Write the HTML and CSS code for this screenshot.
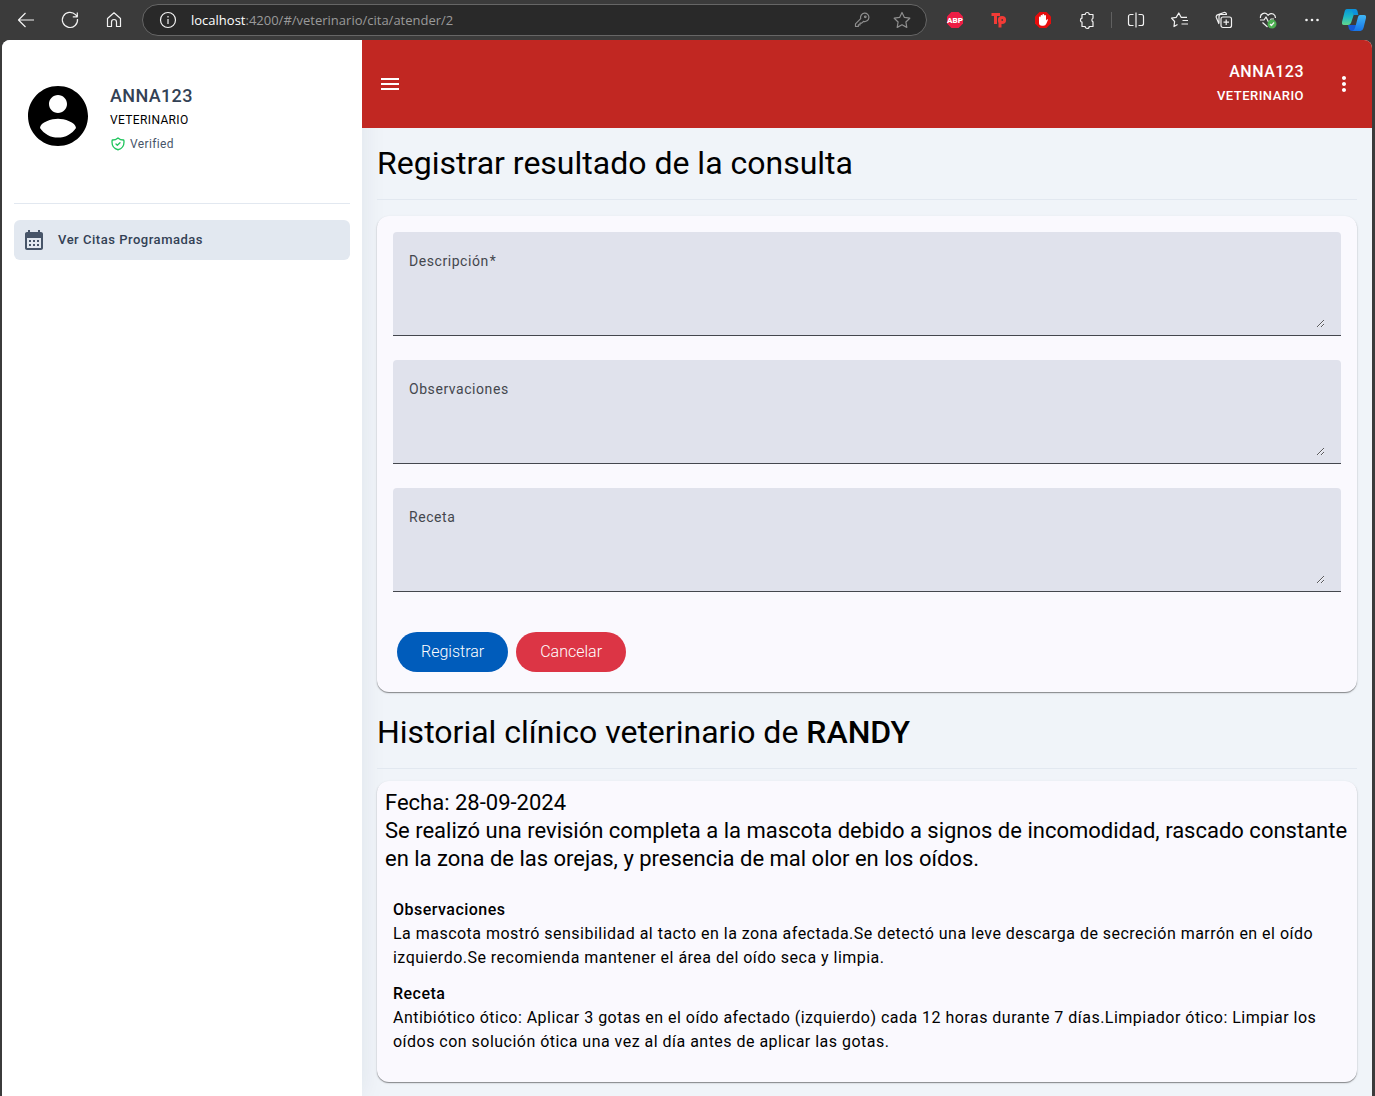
FILE: index.html
```html
<!DOCTYPE html>
<html lang="es">
<head>
<meta charset="utf-8">
<meta name="viewport" content="width=device-width, initial-scale=1">
<title>Registrar resultado de la consulta</title>
<link rel="stylesheet" href="styles.css">
</head>
<body>
<div class="browser">
  <div class="toolbar">
    <div class="toolbar-nav">
      <button class="tool" type="button" aria-label="Atrás"><svg viewBox="0 0 20 20"><path d="M18 10H3M9.500 3 2.500 10l7 7"/></svg></button>
      <button class="tool" type="button" aria-label="Actualizar"><svg viewBox="0 0 20 20"><path d="M17.500 9A7.600 7.600 0 1 1 15.500 4.700L17.200 6.500M17.300 2.500v4.300h-4.500"/></svg></button>
      <button class="tool" type="button" aria-label="Inicio"><svg viewBox="0 0 20 20"><path d="M3.500 8.500v8h4v-4.500a2.500 2.500 0 0 1 5 0v4.500h4v-8L10 2.800z"/></svg></button>
    </div>
    <div class="address">
      <button class="tool" type="button" aria-label="Información del sitio"><svg viewBox="0 0 20 20"><circle cx="10" cy="10" r="7.500"/><path d="M10 9v5M10 6v1.500"/></svg></button>
      <div class="url"><span class="host">localhost</span>:4200/#/veterinario/cita/atender/2</div>
      <div class="address-actions">
        <button class="tool dim" type="button" aria-label="Contraseñas"><svg viewBox="0 0 20 20"><path d="M3.500 16.500v-2.700l5.200-5.200a4.200 4.200 0 1 1 2.800 2.800L9.700 13.200H8v1.700H6.300v1.600z"/><circle cx="13.300" cy="6.800" r=".8"/></svg></button>
        <button class="tool dim" type="button" aria-label="Favoritos"><svg viewBox="0 0 20 20"><path d="m10 2.500 2.400 4.900 5.400.8-3.900 3.800.9 5.400-4.800-2.600-4.800 2.600.9-5.400-3.900-3.800 5.400-.8z"/></svg></button>
      </div>
    </div>
    <div class="extensions">
      <button class="tool" type="button" aria-label="Adblock Plus"><svg viewBox="0 0 20 20"><path class="abp" d="M6.400 2h7.200L18 6.400v7.200L13.600 18H6.400L2 13.600V6.400z"/><text class="abp-text" x="10" y="13">ABP</text></svg></button>
      <button class="tool" type="button" aria-label="Tp"><svg viewBox="0 0 20 20"><path class="tp" d="M2.500 4.500H11M6.500 4.500V14M11 9v8.500"/><circle class="tp" cx="13" cy="10" r="2.600"/></svg></button>
      <button class="tool" type="button" aria-label="AdBlock"><svg viewBox="0 0 20 20"><path class="adb" d="M6.500 2h7L18 6.500v7L13.500 18h-7L2 13.500v-7z"/><path class="hand" d="M6 7.500q0-1 .8-1t.8 1V6q0-1 .9-1t.9 1V5q0-1 .9-1t.9 1v1q0-1 .9-1t.9 1v4.500l.9-1q.8-.6 1.200 0l-1.700 4q-.9 2.200-3 2.200H9Q6 15.700 6 13z"/></svg></button>
      <button class="tool" type="button" aria-label="Extensiones"><svg viewBox="0 0 20 20"><path d="M5 4.500h3.200a2 2 0 0 1 4 0H16v3.800a2 2 0 0 0 0 3.600v4.600h-3.800a2 2 0 0 1-4 0H5v-4.400a2 2 0 0 1 0-3.900z"/></svg></button>
    </div>
    <div class="tools">
      <button class="tool" type="button" aria-label="Pantalla dividida"><svg viewBox="0 0 20 20"><path d="M7.500 4.500h-3a2 2 0 0 0-2 2v7a2 2 0 0 0 2 2h3M12.500 4.500h3a2 2 0 0 1 2 2v7a2 2 0 0 1-2 2h-3M10 2.500v15"/></svg></button>
      <button class="tool" type="button" aria-label="Lista de favoritos"><svg viewBox="0 0 20 20"><path d="m7.500 14.500-3.500 2 .6-5L1.500 8.200l4.700-.8L8.800 3l2.300 4.300H17M12.500 10.500H18M11.500 14H18"/></svg></button>
      <button class="tool" type="button" aria-label="Colecciones"><svg viewBox="0 0 20 20"><rect x="7" y="7" width="10.500" height="10.500" rx="2"/><path d="M12.200 9.500v5.500M9.500 12.200H15M5 14 2.300 7.500a2 2 0 0 1 1.200-2.600l6.500-2.400a2 2 0 0 1 2.500 1.500M5 13V6.500a2 2 0 0 1 2-2h6"/></svg></button>
      <button class="tool" type="button" aria-label="Rendimiento"><svg viewBox="0 0 20 20"><path d="M2.500 8a4 4 0 0 1 7-3.300l.6.600.7-.7A4 4 0 0 1 17.400 8M2 10h4l2-3 3 6 2-4h3M4.500 12.500 9.500 17"/><circle class="ok" cx="14" cy="14" r="4.500"/><path d="m12 14 1.400 1.500 2.700-3"/></svg></button>
      <button class="tool" type="button" aria-label="Más"><svg viewBox="0 0 20 20"><g class="dots"><circle cx="4.500" cy="10" r="1.300"/><circle cx="10" cy="10" r="1.300"/><circle cx="15.500" cy="10" r="1.300"/></g></svg></button>
    </div>
    <button class="tool copilot" type="button" aria-label="Copilot"><svg viewBox="0 0 24 24"><defs><linearGradient id="ca" x1="0" y1="0" x2="0" y2="1"><stop offset="0" stop-color="#0795d8"/><stop offset=".5" stop-color="#1eb9c6"/><stop offset="1" stop-color="#62d68c"/></linearGradient><linearGradient id="cb" x1="0" y1="0" x2="0" y2="1"><stop offset="0" stop-color="#40b7f5"/><stop offset="1" stop-color="#1674e8"/></linearGradient></defs><path fill="#1558d6" d="M6 17h10l-3 4.500q-1 1.500-3 1.500-2 0-3-2z"/><path fill="url(#ca)" d="M5 1h7q2 0 2.500 2L12 6 9 15q-.8 2-3 2H2q-2.500 0-2-3L2.500 4Q3 1 5 1z"/><path fill="#0d92dd" d="M9 1h4q2 0 2.500 2l.8 4H12z"/><path fill="url(#cb)" d="M18 7h4q2.500 0 2 3l-2.500 10q-.8 3-3 3H10q2 0 3-3l3-11q.5-2 2-2z"/></svg></button>
  </div>

  <div class="app">
    <aside class="sidebar">
      <div class="profile">
        <svg class="avatar" viewBox="0 0 24 24" aria-hidden="true"><path d="M12 2C6.480 2 2 6.480 2 12s4.480 10 10 10 10-4.480 10-10S17.520 2 12 2zm0 3c1.660 0 3 1.340 3 3s-1.340 3-3 3-3-1.340-3-3 1.340-3 3-3zm0 14.200c-2.500 0-4.710-1.280-6-3.220.03-1.990 4-3.080 6-3.080 1.990 0 5.970 1.090 6 3.080-1.290 1.940-3.500 3.220-6 3.220z"/></svg>
        <div class="profile-text">
          <div class="profile-name">ANNA123</div>
          <div class="profile-role">VETERINARIO</div>
          <div class="verified"><svg viewBox="0 0 24 24" aria-hidden="true"><path d="m9 12 2 2 4-4m5.600-4A12 12 0 0 1 12 2.900 12 12 0 0 1 3.400 6 12 12 0 0 0 3 9c0 5.600 3.800 10.300 9 11.600 5.200-1.300 9-6 9-11.600 0-1-.1-2.100-.4-3z"/></svg>Verified</div>
        </div>
      </div>
      <nav class="menu">
        <a class="menu-item" href="#citas"><svg viewBox="0 0 24 24" aria-hidden="true"><path d="M19 4h-1V2h-2v2H8V2H6v2H5c-1.110 0-1.990.9-1.990 2L3 20c0 1.100.89 2 2 2h14c1.100 0 2-.9 2-2V6c0-1.100-.9-2-2-2zm0 16H5V10h14v10zM9 14H7v-2h2v2zm4 0h-2v-2h2v2zm4 0h-2v-2h2v2zm-8 4H7v-2h2v2zm4 0h-2v-2h2v2zm4 0h-2v-2h2v2z"/></svg>Ver Citas Programadas</a>
      </nav>
    </aside>

    <div class="content">
      <header class="topbar">
        <button class="icon-button" type="button" aria-label="Menú"><svg viewBox="0 0 24 24"><path d="M3 18h18v-2H3v2zm0-5h18v-2H3v2zm0-7v2h18V6H3z"/></svg></button>
        <div class="account">
          <div class="account-name">ANNA123</div>
          <div class="account-role">VETERINARIO</div>
        </div>
        <button class="icon-button" type="button" aria-label="Opciones"><svg viewBox="0 0 24 24"><path d="M12 8c1.100 0 2-.9 2-2s-.9-2-2-2-2 .9-2 2 .9 2 2 2zm0 2c-1.100 0-2 .9-2 2s.9 2 2 2 2-.9 2-2-.9-2-2-2zm0 6c-1.100 0-2 .9-2 2s.9 2 2 2 2-.9 2-2-.9-2-2-2z"/></svg></button>
      </header>

      <main class="main">
        <h1 class="title">Registrar resultado de la consulta</h1>
        <form class="card form">
          <div class="field">
            <textarea id="descripcion" required></textarea>
            <label for="descripcion">Descripción<span class="required">*</span></label>
          </div>
          <div class="field">
            <textarea id="observaciones"></textarea>
            <label for="observaciones">Observaciones</label>
          </div>
          <div class="field">
            <textarea id="receta"></textarea>
            <label for="receta">Receta</label>
          </div>
          <div class="actions">
            <button class="button primary" type="submit">Registrar</button>
            <button class="button danger" type="button">Cancelar</button>
          </div>
        </form>

        <h2 class="title">Historial clínico veterinario de <strong>RANDY</strong></h2>
        <article class="card record">
          <header class="record-head">
            <div>Fecha: 28-09-2024</div>
            <div>Se realizó una revisión completa a la mascota debido a signos de incomodidad, rascado constante en la zona de las orejas, y presencia de mal olor en los oídos.</div>
          </header>
          <div class="record-body">
            <section>
              <h3>Observaciones</h3>
              <p>La mascota mostró sensibilidad al tacto en la zona afectada.Se detectó una leve descarga de secreción marrón en el oído izquierdo.Se recomienda mantener el área del oído seca y limpia.</p>
            </section>
            <section>
              <h3>Receta</h3>
              <p>Antibiótico ótico: Aplicar 3 gotas en el oído afectado (izquierdo) cada 12 horas durante 7 días.Limpiador ótico: Limpiar los oídos con solución ótica una vez al día antes de aplicar las gotas.</p>
            </section>
          </div>
        </article>
      </main>
    </div>
  </div>
</div>
</body>
</html>
```
FILE: styles.css
```css
* {
  box-sizing: border-box;
}

:root {
  --tracking: 0.03em;
  --tracking-wide: 0.04em;
}

body {
  margin: 0;
  background: #3b3b3b;
  color: #000;
  font-family: Roboto, "Noto Sans", sans-serif;
  font-size: 16px;
  line-height: 24px;
}

h1, h2, h3, p {
  margin: 0;
}

button {
  border: 0;
  padding: 0;
  background: none;
  color: inherit;
  font: inherit;
  cursor: pointer;
}

.browser {
  display: flex;
  flex-direction: column;
  min-height: 100vh;
}

/* Browser toolbar */
.toolbar {
  display: flex;
  align-items: center;
  height: 40px;
  padding-left: 16px;
  padding-right: 9px;
  color: #f2f2f2;
}

.toolbar-nav,
.extensions,
.tools,
.address-actions {
  display: flex;
  align-items: center;
  gap: 24px;
}

.tool {
  display: flex;
  width: 20px;
  height: 20px;
}

.tool svg {
  width: 20px;
  height: 20px;
  fill: none;
  stroke: currentColor;
  stroke-width: 1.2;
  stroke-linejoin: round;
}

.tool.dim {
  color: #8f8f8f;
}

.address {
  flex: 1;
  display: flex;
  align-items: center;
  gap: 13px;
  height: 32px;
  margin-left: 18px;
  padding: 0 14px 0 15px;
  border: 1px solid #666;
  border-radius: 16px;
  background: #292929;
}

.address-actions {
  gap: 20px;
}

.url {
  flex: 1;
  color: #9a9a9a;
  font-family: "Open Sans", "Noto Sans", sans-serif;
  font-size: 13px;
  line-height: 20px;
  white-space: nowrap;
}

.host {
  color: #fff;
}

.extensions {
  margin-left: 18px;
  padding-right: 14px;
}

.tools {
  height: 16px;
  padding-left: 14px;
  border-left: 1px solid #606060;
}

.copilot {
  margin-left: 20px;
}

.copilot,
.tool.copilot svg {
  width: 24px;
  height: 24px;
  stroke: none;
}

.tool .abp {
  fill: #ed1e45;
  stroke: none;
}

.abp-text {
  fill: #fff;
  stroke: none;
  font-family: Roboto, sans-serif;
  font-size: 8px;
  font-weight: 900;
  text-anchor: middle;
}

.tool .tp {
  stroke: #f23b36;
  stroke-width: 3;
}

.tool .adb {
  fill: #e60d0d;
  stroke: none;
}

.tool .hand {
  fill: #fff;
  stroke: none;
}

.tool .ok {
  fill: #4caf50;
  stroke: none;
}

.tool .dots {
  fill: currentColor;
  stroke: none;
}

/* Application shell */
.app {
  flex: 1;
  display: flex;
  margin: 0 3px 0 2px;
  border-radius: 8px 8px 0 0;
  background: #f0f4f9;
  overflow: hidden;
}

.sidebar {
  flex: 0 0 360px;
  padding: 40px 12px;
  background: #fff;
  box-shadow: 0 0 24px rgba(30, 41, 59, 0.08);
}

.profile {
  display: flex;
  gap: 16px;
  height: 124px;
  padding-left: 8px;
  border-bottom: 1px solid #e2e8f0;
}

.avatar {
  width: 72px;
  height: 72px;
}

.profile-text {
  padding-top: 4px;
  font-size: 12px;
  letter-spacing: var(--tracking);
}

.profile-name {
  color: #334155;
  font-size: 18px;
  font-weight: 500;
}

.verified {
  display: flex;
  align-items: center;
  gap: 4px;
  color: #475569;
}

.verified svg {
  width: 16px;
  height: 16px;
  fill: none;
  stroke: #22c55e;
  stroke-width: 2;
  stroke-linecap: round;
  stroke-linejoin: round;
}

.menu {
  margin-top: 16px;
}

.menu-item {
  display: flex;
  align-items: center;
  gap: 12px;
  height: 40px;
  padding: 0 8px;
  border-radius: 6px;
  background: #e2e8f0;
  color: #334155;
  font-size: 13px;
  font-weight: 500;
  letter-spacing: var(--tracking-wide);
  text-decoration: none;
}

.menu-item svg {
  width: 24px;
  height: 24px;
  fill: #475569;
}

.content {
  flex: 1;
  min-width: 0;
}

.topbar {
  display: flex;
  align-items: center;
  gap: 28px;
  height: 88px;
  padding: 0 16px;
  background: #c12722;
  color: #fff;
}

.icon-button {
  display: flex;
}

.icon-button svg {
  width: 24px;
  height: 24px;
  fill: currentColor;
}

.account {
  margin-left: auto;
  font-weight: 500;
  letter-spacing: var(--tracking);
  text-align: right;
}

.account-role {
  font-size: 13px;
}

/* Page content */
.main {
  padding: 15px 15px 14px;
}

.title {
  padding-bottom: 16px;
  border-bottom: 1px solid #e2e8f0;
  font-size: 32px;
  font-weight: 400;
  line-height: 40px;
}

.title strong {
  font-weight: 500;
}

.card {
  border-radius: 12px;
  background: #faf9fe;
  box-shadow: 0 1px 1px rgba(0, 0, 0, 0.4), 0 1px 3px rgba(0, 0, 0, 0.1);
}

.form {
  display: flex;
  flex-direction: column;
  gap: 24px;
  margin: 16px 0 20px;
  padding: 16px 16px 20px;
}

.field {
  position: relative;
  height: 104px;
  padding: 24px 16px 7px;
  border-bottom: 1px solid #44474e;
  border-radius: 4px 4px 0 0;
  background: #e0e2ec;
}

.field textarea {
  display: block;
  width: 100%;
  height: 72px;
  padding: 0;
  border: 0;
  outline: 0;
  background: transparent;
  color: #1a1b1f;
  font: inherit;
  resize: vertical;
}

.field label {
  position: absolute;
  top: 17px;
  left: 16px;
  color: #44474e;
  font-size: 14px;
  letter-spacing: var(--tracking-wide);
}

.required {
  margin-left: 1px;
}

.actions {
  display: flex;
  gap: 8px;
  margin-top: 16px;
  padding-left: 4px;
}

.button {
  height: 40px;
  padding: 0 24px;
  border-radius: 20px;
  color: #fff;
  font-weight: 300;
}

.primary {
  background: #005cbb;
}

.danger {
  background: #dc3545;
}

.record {
  margin-top: 12px;
  padding: 8px 8px 28px;
}

.record-head {
  font-size: 22px;
  line-height: 28px;
}

.record-body {
  display: flex;
  flex-direction: column;
  gap: 12px;
  padding: 25px 8px 0;
  letter-spacing: var(--tracking);
}

.record-body h3 {
  font-size: 16px;
  font-weight: 500;
}
```
